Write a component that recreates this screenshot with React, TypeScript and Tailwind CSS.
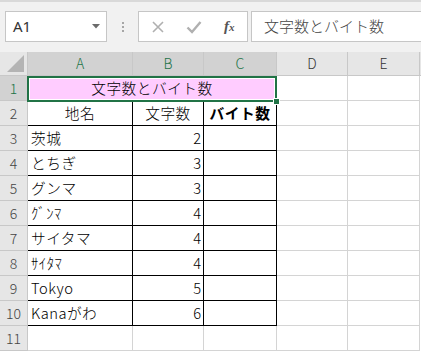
import React from "react";

const jp = "font-['Noto_Sans_CJK_JP',sans-serif]";

interface Col {
  key: string;
  width: string;
  selected: boolean;
}

const cols: Col[] = [
  { key: "A", width: "w-[105px]", selected: true },
  { key: "B", width: "w-[71px]", selected: true },
  { key: "C", width: "w-[73px]", selected: true },
  { key: "D", width: "w-[71px]", selected: false },
  { key: "E", width: "w-[72px]", selected: false },
];

const rows: [string, number][] = [
  ["茨城", 2],
  ["とちぎ", 3],
  ["グンマ", 3],
  ["ｸﾞﾝﾏ", 4],
  ["サイタマ", 4],
  ["ｻｲﾀﾏ", 4],
  ["Tokyo", 5],
  ["Kanaがわ", 6],
];

const RowHeader: React.FC<{ n: number; selected?: boolean }> = ({ n, selected }) => (
  <div
    className={`w-[28px] h-full flex items-center justify-center border-r border-b border-[#c8c8c8] ${jp} font-light text-[14px] ${
      selected ? "bg-[#d2d2d2] text-[#217346]" : "bg-[#e6e6e6] text-[#444]"
    }`}>
    {n}
  </div>
);

const Toolbar: React.FC = () => (
  <div className="h-[52px] bg-[#f1f1f1] border-t-2 border-[#d9d9d9] flex items-start pt-[9px]">
    {/* Name box */}
    <div className="ml-[5px] w-[102px] h-[31px] bg-white border border-[#c6c6c6] flex items-center pl-[7px] pr-[6px]">
      <span className="font-['Noto_Sans',sans-serif] text-[15px] text-[#333] flex-1">A1</span>
      <svg width="8" height="5" viewBox="0 0 8 5">
        <path d="M0 0h8L4 4.5z" fill="#6b6b6b" />
      </svg>
    </div>

    {/* Dots */}
    <div className="w-[31px] h-[31px] flex flex-col items-center justify-center gap-[2px]">
      <div className="w-[2px] h-[2px] bg-[#a6a6a6]"></div>
      <div className="w-[2px] h-[2px] bg-[#a6a6a6]"></div>
      <div className="w-[2px] h-[2px] bg-[#a6a6a6]"></div>
    </div>

    {/* Cancel / Enter / fx */}
    <div className="w-[110px] h-[31px] bg-white border border-[#c6c6c6] flex items-center">
      <svg width="14" height="14" viewBox="0 0 14 14" className="ml-[12px]">
        <path d="M2 2l10 10M12 2L2 12" stroke="#b0b0b0" strokeWidth="1.6" />
      </svg>
      <svg width="16" height="14" viewBox="0 0 16 14" className="ml-[21px]">
        <path d="M1.5 7.5l4.5 4.5L14.5 2" stroke="#b0b0b0" strokeWidth="2.4" fill="none" />
      </svg>
      <span className="ml-[22px] font-['Liberation_Serif',serif] italic font-bold text-[#555] text-[15px] leading-none">
        f<span className="text-[11px]">x</span>
      </span>
    </div>

    {/* Formula input */}
    <div className={`ml-[3px] flex-1 h-[31px] bg-white border border-r-0 border-[#c6c6c6] flex items-center pl-[12px] ${jp} font-light text-[15px] text-[#444]`}>
      文字数とバイト数
    </div>
  </div>
);

export default function App() {
  const textCls = `${jp} text-[14.7px] text-black`;
  return (
    <div className="w-[421px] h-[352px] overflow-hidden bg-white">
      <Toolbar />

      <div className="relative">
        {/* Column headers */}
        <div className="flex h-[24px]">
          <div className="w-[28px] h-full bg-[#e6e6e6] border-r border-b border-[#c8c8c8] flex items-end justify-end pr-[3px] pb-[3px]">
            <svg width="17" height="17" viewBox="0 0 17 17">
              <path d="M17 0V17H0z" fill="#b4b4b4" />
            </svg>
          </div>
          {cols.map((c) => (
            <div
              key={c.key}
              className={`${c.width} h-full flex items-center justify-center border-r border-b border-[#c8c8c8] ${jp} font-light text-[14px] ${
                c.selected ? "bg-[#d2d2d2] text-[#217346]" : "bg-[#e6e6e6] text-[#333]"
              }`}>
              {c.key}
            </div>
          ))}
          <div className="flex-1 h-full bg-[#e6e6e6] border-b border-[#c8c8c8]"></div>
        </div>

        {/* Row 1 */}
        <div className="flex h-[25px]">
          <RowHeader n={1} selected />
          <div className={`w-[249px] h-full bg-[#ffccff] border-r border-b border-black flex items-center justify-center font-light tracking-[0.5px] ${textCls}`}>
            文字数とバイト数
          </div>
          <div className="w-[71px] h-full border-r border-b border-[#d4d4d4]"></div>
          <div className="w-[72px] h-full border-r border-b border-[#d4d4d4]"></div>
        </div>

        {/* Row 2 */}
        <div className="flex h-[25px]">
          <RowHeader n={2} />
          <div className={`w-[105px] h-full border-r border-b border-black flex items-center justify-center font-light tracking-[0.5px] ${textCls}`}>地名</div>
          <div className={`w-[71px] h-full border-r border-b border-black flex items-center justify-center font-light tracking-[0.5px] ${textCls}`}>文字数</div>
          <div className={`w-[73px] h-full border-r border-b border-black flex items-center justify-center font-bold tracking-[0.5px] ${textCls}`}>バイト数</div>
          <div className="w-[71px] h-full border-r border-b border-[#d4d4d4]"></div>
          <div className="w-[72px] h-full border-r border-b border-[#d4d4d4]"></div>
        </div>

        {/* Rows 3-10 */}
        {rows.map(([name, len], i) => (
          <div key={i} className="flex h-[25px]">
            <RowHeader n={i + 3} />
            <div className={`w-[105px] h-full border-r border-b border-black flex items-center pl-[3px] whitespace-nowrap font-light tracking-[0.5px] ${textCls}`}>{name}</div>
            <div className={`w-[71px] h-full border-r border-b border-black flex items-center justify-end pr-[2px] font-light ${textCls}`}>{len}</div>
            <div className="w-[73px] h-full border-r border-b border-black"></div>
            <div className="w-[71px] h-full border-r border-b border-[#d4d4d4]"></div>
            <div className="w-[72px] h-full border-r border-b border-[#d4d4d4]"></div>
          </div>
        ))}

        {/* Row 11 */}
        <div className="flex h-[25px]">
          <RowHeader n={11} />
          <div className="w-[105px] h-full border-r border-b border-[#d4d4d4]"></div>
          <div className="w-[71px] h-full border-r border-b border-[#d4d4d4]"></div>
          <div className="w-[73px] h-full border-r border-b border-[#d4d4d4]"></div>
          <div className="w-[71px] h-full border-r border-b border-[#d4d4d4]"></div>
          <div className="w-[72px] h-full border-r border-b border-[#d4d4d4]"></div>
        </div>

        {/* Selection A1:C1 */}
        <div className="absolute left-[27px] top-[24px] w-[250px] h-[26px] border-2 border-[#217346] shadow-[inset_0_0_0_1px_white]"></div>
        <div className="absolute left-[273px] top-[46px] w-[7px] h-[7px] bg-[#217346] border border-white"></div>
      </div>
    </div>
  );
}
